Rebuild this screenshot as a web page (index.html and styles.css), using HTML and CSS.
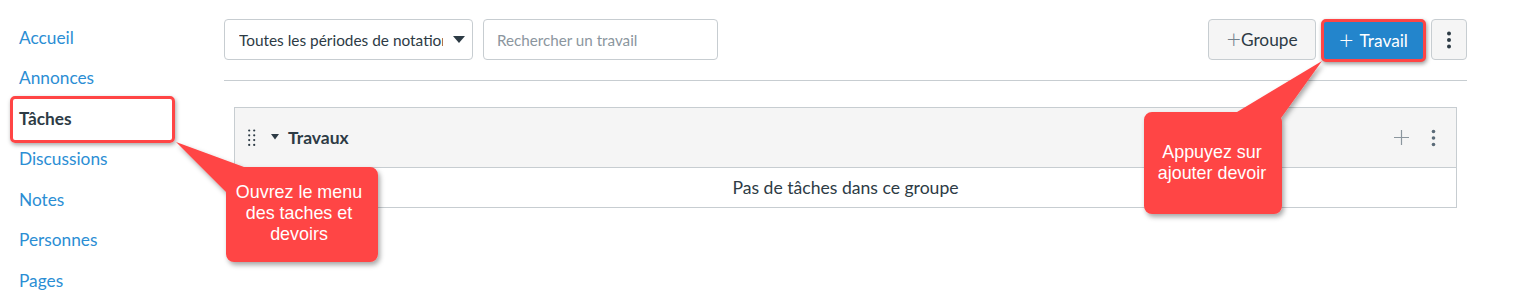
FILE: index.html
```html
<!DOCTYPE html>
<html lang="fr">
<head>
<meta charset="utf-8">
<title>Tâches</title>
<link rel="stylesheet" href="styles.css">
</head>
<body>
<div class="app">
  <nav class="sidebar">
    <a class="nav-link" href="#">Accueil</a>
    <a class="nav-link" href="#">Annonces</a>
    <a class="nav-link active" href="#">Tâches</a>
    <a class="nav-link" href="#">Discussions</a>
    <a class="nav-link" href="#">Notes</a>
    <a class="nav-link" href="#">Personnes</a>
    <a class="nav-link" href="#">Pages</a>
  </nav>
  <main class="content">
    <div class="toolbar">
      <div class="filters">
        <div class="select">
          <span class="select-text">Toutes les périodes de notation</span>
          <svg class="select-arrow" width="12" height="7" viewBox="0 0 12 7"><path d="M0 0h12L6 7z" fill="#2d3b45"/></svg>
        </div>
        <div class="search">Rechercher un travail</div>
      </div>
      <div class="actions">
        <button class="btn btn-default"><span class="plus-thin">+</span>Groupe</button>
        <button class="btn btn-primary"><span class="plus-thin light">+</span>Travail</button>
        <button class="btn btn-kebab" aria-label="Options">
          <svg width="4" height="18" viewBox="0 0 4 18"><circle cx="2" cy="2.5" r="2" fill="#2d3b45"/><circle cx="2" cy="9" r="2" fill="#2d3b45"/><circle cx="2" cy="15.5" r="2" fill="#2d3b45"/></svg>
        </button>
      </div>
    </div>
    <section class="group">
      <header class="group-header">
        <div class="group-title">
          <svg class="drag" width="8" height="17" viewBox="0 0 8 17">
            <g fill="#2d3b45">
              <circle cx="1.2" cy="1.5" r="1.1"/><circle cx="6.2" cy="1.5" r="1.1"/>
              <circle cx="1.2" cy="6.3" r="1.1"/><circle cx="6.2" cy="6.3" r="1.1"/>
              <circle cx="1.2" cy="11.1" r="1.1"/><circle cx="6.2" cy="11.1" r="1.1"/>
              <circle cx="1.2" cy="15.9" r="1.1"/><circle cx="6.2" cy="15.9" r="1.1"/>
            </g>
          </svg>
          <svg class="caret" width="8" height="6" viewBox="0 0 8 6"><path d="M0 0h8L4 5.5z" fill="#2d3b45"/></svg>
          <h2 class="group-name">Travaux</h2>
        </div>
        <div class="group-tools">
          <svg width="15" height="15" viewBox="0 0 15 15"><path d="M7.5 0v15M0 7.5h15" stroke="#8b969e" stroke-width="1.2"/></svg>
          <svg width="5" height="18" viewBox="0 0 5 18"><g fill="#5b6b78"><circle cx="2.5" cy="2.5" r="1.8"/><circle cx="2.5" cy="9" r="1.8"/><circle cx="2.5" cy="15.5" r="1.8"/></g></svg>
        </div>
      </header>
      <div class="group-body">Pas de tâches dans ce groupe</div>
    </section>
  </main>
</div>

<div class="callout callout-left">
  <svg class="callout-shape" width="260" height="150" viewBox="0 0 260 150">
    <defs><filter id="sh1" x="-20%" y="-20%" width="140%" height="140%"><feDropShadow dx="2" dy="3" stdDeviation="2.5" flood-color="#000" flood-opacity="0.35"/></filter></defs>
    <path filter="url(#sh1)" fill="#ff4545" d="M4 2 L72 27 H198 a8 8 0 0 1 8 8 V114 a8 8 0 0 1 -8 8 H62 a8 8 0 0 1 -8 -8 V52 Z"/>
  </svg>
  <div class="callout-text left-text">Ouvrez le menu des taches et devoirs</div>
</div>

<div class="callout callout-right">
  <svg class="callout-shape" width="200" height="170" viewBox="0 0 200 170">
    <defs><filter id="sh2" x="-20%" y="-20%" width="140%" height="140%"><feDropShadow dx="2" dy="3" stdDeviation="2.5" flood-color="#000" flood-opacity="0.35"/></filter></defs>
    <path filter="url(#sh2)" fill="#ff4545" d="M181 1 L140 58 a8 8 0 0 1 1 4 V146 a8 8 0 0 1 -8 8 H11 a8 8 0 0 1 -8 -8 V60 a8 8 0 0 1 8 -8 H96 Z"/>
  </svg>
  <div class="callout-text right-text">Appuyez sur ajouter devoir</div>
</div>
</body>
</html>
```

FILE: styles.css
```css
* { box-sizing: border-box; }
*::before, *::after { box-sizing: border-box; }

html, body {
  margin: 0;
  padding: 0;
  background: #fff;
  font-family: Lato, "Open Sans", sans-serif;
  color: #2d3b45;
}

.app {
  display: flex;
  width: 1525px;
  height: 301px;
  overflow: hidden;
}

.sidebar {
  width: 224px;
  flex: none;
  display: flex;
  flex-direction: column;
  padding-top: 18px;
}

.nav-link {
  display: block;
  height: 40.6px;
  line-height: 40px;
  padding-left: 19px;
  font-size: 17.3px;
  color: #2b8ed4;
  text-decoration: none;
  position: relative;
}

.nav-link.active {
  color: #2d3b45;
  font-weight: 700;
}

.nav-link.active::after {
  content: "";
  position: absolute;
  left: 10px;
  top: -3px;
  width: 165px;
  height: 47px;
  border: 3px solid #ff4545;
  border-radius: 5px;
  box-shadow: 1px 2px 4px rgba(0,0,0,0.35);
}

.content {
  flex: none;
  width: 1243px;
  padding-top: 19px;
}

.toolbar {
  display: flex;
  justify-content: space-between;
  align-items: flex-start;
  height: 62px;
  border-bottom: 1px solid #c7cdd1;
}

.filters {
  display: flex;
  gap: 10px;
}

.select {
  width: 249px;
  height: 41px;
  border: 1px solid #c7cdd1;
  border-radius: 4px;
  display: flex;
  align-items: center;
  padding-left: 14px;
  padding-right: 8px;
}

.select-text {
  width: 204px;
  flex: none;
  overflow: hidden;
  white-space: nowrap;
  font-size: 15.4px;
  color: #2d3b45;
}

.select-arrow { margin-left: 10px; flex: none; }

.search {
  width: 235px;
  height: 41px;
  border: 1px solid #c7cdd1;
  border-radius: 4px;
  display: flex;
  align-items: center;
  padding-left: 13px;
  font-size: 15.2px;
  color: #8b969e;
}

.actions {
  display: flex;
  gap: 5px;
  align-items: flex-start;
}

.btn {
  font-family: Lato, "Open Sans", sans-serif;
  height: 41px;
  border-radius: 4px;
  font-size: 17.3px;
  display: flex;
  align-items: center;
  justify-content: center;
  cursor: pointer;
  padding: 0;
}

.btn-default {
  width: 108px;
  background: #f5f5f5;
  border: 1px solid #c7cdd1;
  color: #2d3b45;
}

.plus-thin {
  font-weight: 300;
  font-size: 25px;
  color: #73818c;
  line-height: 1;
  margin-top: -3px;
}

.plus-thin.light {
  color: #fff;
  margin-right: 6px;
}

.btn-primary {
  width: 105px;
  height: 43px;
  background: #2385cc;
  border: 3px solid #ff4545;
  border-radius: 5px;
  color: #fff;
  box-shadow: 1px 2px 4px rgba(0,0,0,0.4);
}

.btn-kebab {
  width: 36px;
  background: #f5f5f5;
  border: 1px solid #c7cdd1;
}

.group {
  margin: 26px 10px 0;
  border: 1px solid #c7cdd1;
}

.group-header {
  height: 60px;
  background: #f5f5f5;
  border-bottom: 1px solid #c7cdd1;
  display: flex;
  align-items: center;
  justify-content: space-between;
  padding: 0 20px 0 13px;
}

.group-title {
  display: flex;
  align-items: center;
}

.drag { margin-right: 15px; }
.caret { margin-right: 9px; margin-top: -2px; }

.group-name {
  margin: 0;
  font-size: 17.5px;
  font-weight: 700;
  color: #2d3b45;
}

.group-tools {
  display: flex;
  align-items: center;
  gap: 22px;
}

.group-body {
  height: 39px;
  display: flex;
  align-items: center;
  justify-content: center;
  font-size: 17.6px;
  color: #2d3b45;
}

/* annotation callouts */
.callout {
  position: absolute;
}

.callout-shape { display: block; }

.callout-left { left: 172px; top: 140px; }
.callout-right { left: 1141px; top: 60px; }

.callout-text {
  position: absolute;
  font-family: "Liberation Sans", Arial, sans-serif;
  font-size: 17.9px;
  line-height: 21px;
  color: #fff;
  text-align: center;
}

.left-text {
  left: 52px;
  top: 42px;
  width: 150px;
}

.right-text {
  left: 0;
  top: 82px;
  width: 142px;
}
```
